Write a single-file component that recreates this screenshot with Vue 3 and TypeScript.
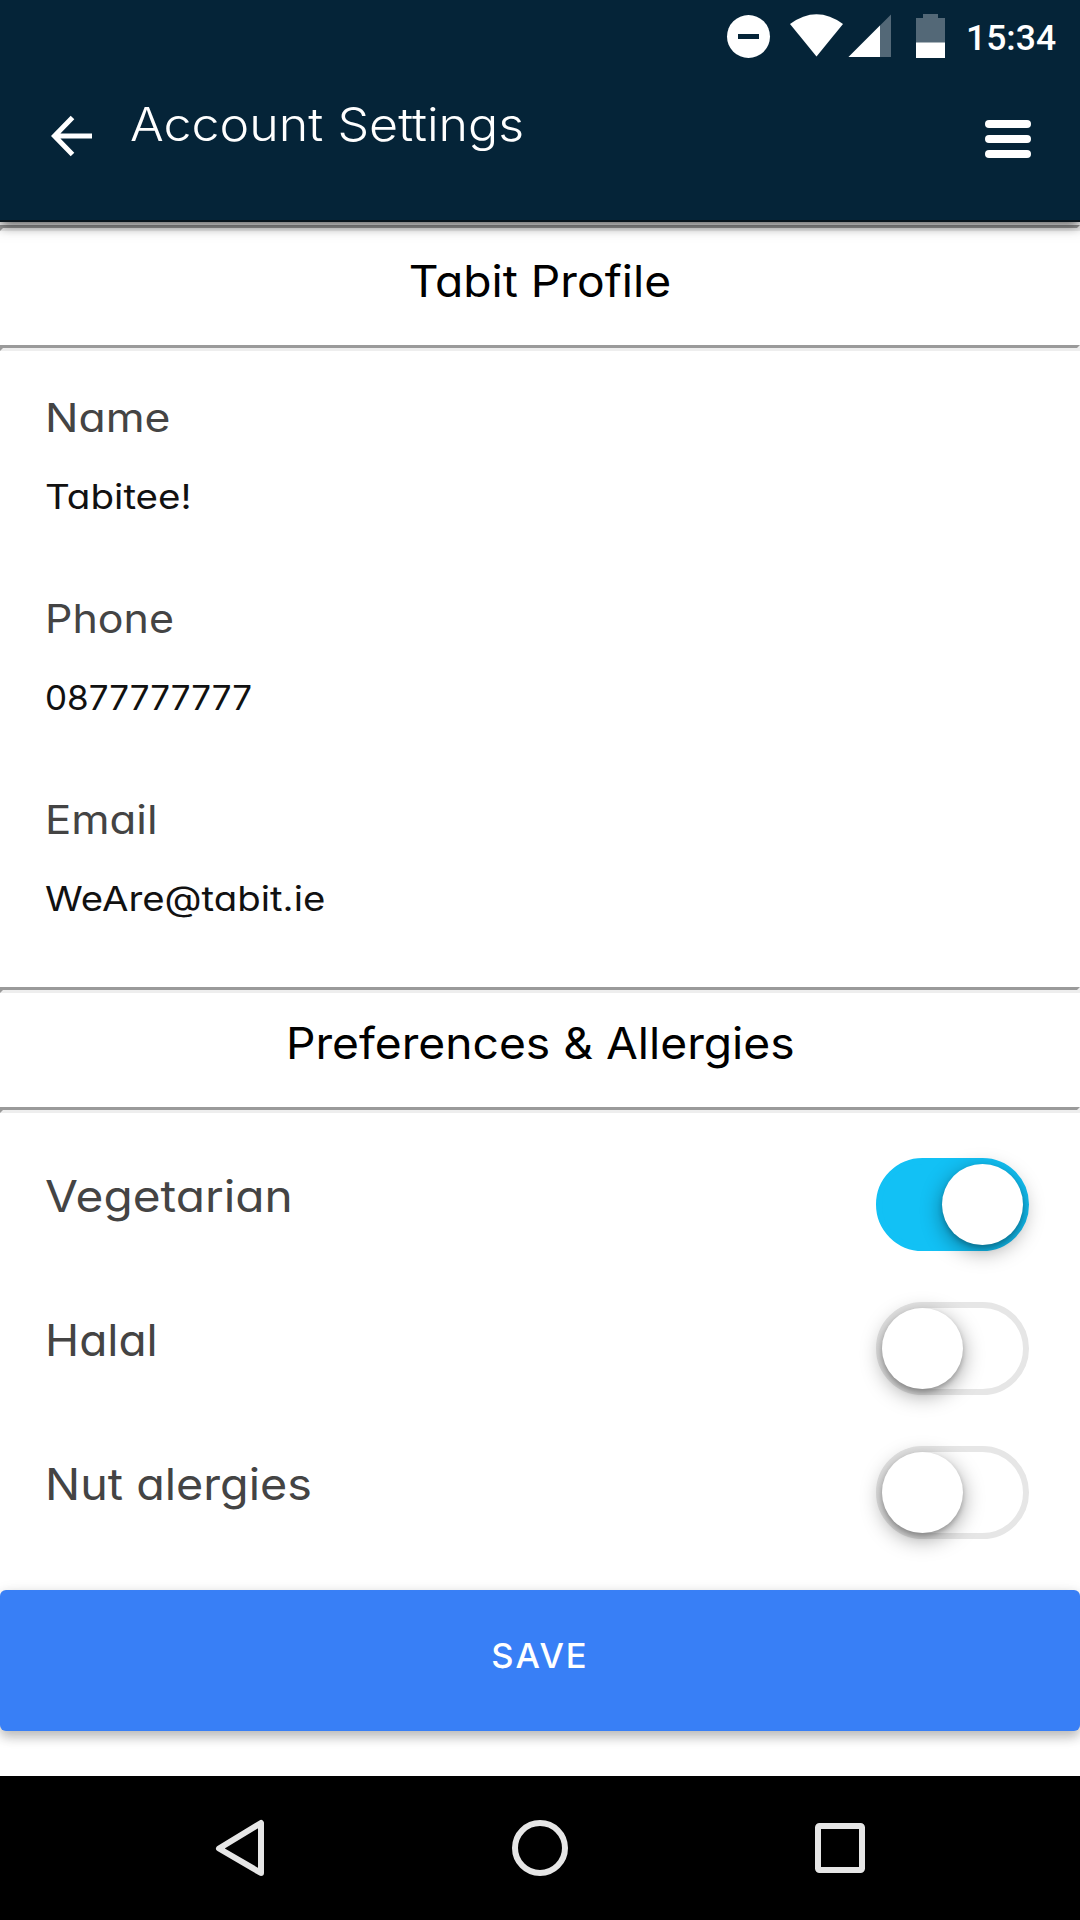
<script setup lang="ts">
import { ref } from 'vue'

interface Field { label: string; value: string; labelStretch: number; valueStretch: number }
interface Preference { label: string; on: boolean; stretch: number }

const fields: Field[] = [
  { label: 'Name', value: 'Tabitee!', labelStretch: 1.125, valueStretch: 1.117 },
  { label: 'Phone', value: '0877777777', labelStretch: 1.087, valueStretch: 1.015 },
  { label: 'Email', value: 'WeAre@tabit.ie', labelStretch: 1.107, valueStretch: 1.112 },
]

const preferences = ref<Preference[]>([
  { label: 'Vegetarian', on: true, stretch: 1.086 },
  { label: 'Halal', on: false, stretch: 1.044 },
  { label: 'Nut alergies', on: false, stretch: 1.061 },
])

// Widens the letterforms horizontally, keeping the left edge in place.
const stretch = (x: number) => ({ transform: `scaleX(${x})` })
</script>

<template>
  <div class="screen">
    <header class="header">
      <div class="status">
        <svg class="status-icons" width="240" height="72" viewBox="720 0 240 72">
          <circle cx="748.5" cy="36.5" r="21.5" fill="#fff" />
          <rect x="738" y="34" width="21" height="5" fill="#052438" />
          <path d="M790 24Q816.500 4.500 843 24L816.500 56.500Z" fill="#fff" />
          <path d="M891 14.500V57H848.500Z" fill="#536877" />
          <path d="M880 25.500V57H848.500Z" fill="#fff" />
          <path d="M923 14H938V18H945V43H916V18H923Z" fill="#536877" />
          <rect x="916" y="42.500" width="29" height="15.500" fill="#fff" />
        </svg>
        <span class="clock">15:34</span>
      </div>
      <div class="toolbar">
        <svg class="back" width="44" height="44" viewBox="0 0 44 44">
          <path d="M41 22H4M21.500 3.500L3.500 22L21.500 40.500" fill="none" stroke="#fff" stroke-width="5" />
        </svg>
        <h1 class="title">Account Settings</h1>
        <div class="menu"><i></i><i></i><i></i></div>
      </div>
    </header>

    <main class="content">
      <hr />
      <h2 class="heading">Tabit Profile</h2>
      <hr />
      <section class="fields">
        <div v-for="f in fields" :key="f.label" class="field">
          <div class="label" :style="stretch(f.labelStretch)">{{ f.label }}</div>
          <div class="value" :style="stretch(f.valueStretch)">{{ f.value }}</div>
        </div>
      </section>
      <hr />
      <h2 class="heading">Preferences &amp; Allergies</h2>
      <hr />
      <section class="toggles">
        <div v-for="p in preferences" :key="p.label" class="row" @click="p.on = !p.on">
          <span class="name" :style="stretch(p.stretch)">{{ p.label }}</span>
          <span class="track" :class="{ on: p.on }"><span class="knob"></span></span>
        </div>
      </section>
      <button class="save">SAVE</button>
    </main>

    <nav class="nav">
      <svg width="1080" height="144" viewBox="0 0 1080 144" fill="none" stroke="#e6e6e6" stroke-width="6" stroke-linejoin="round">
        <path d="M219 72.500L261 47V97Z" />
        <circle cx="540" cy="72" r="25" />
        <rect x="818" y="50" width="44" height="44" rx="1.500" />
      </svg>
    </nav>
  </div>
</template>

<style>
body { margin: 0; background: #fff; }
</style>

<style scoped>
.screen {
  width: 1080px;
  height: 1920px;
  display: flex;
  flex-direction: column;
  overflow: hidden;
  background: #fff;
  font-family: Inter, "Open Sans", sans-serif;
  font-feature-settings: "cv11" 1;
}
.header {
  position: relative;
  z-index: 1;
  flex: none;
  box-sizing: border-box;
  height: 222px;
  background: #052438;
  border-bottom: 2px solid #08151d;
  box-shadow: 0 3px 12px rgba(0, 0, 0, 0.7);
}
.status {
  height: 72px;
  display: flex;
  justify-content: flex-end;
}
.status-icons { flex: none; }
.clock {
  width: 114px;
  margin-left: 6px;
  color: #fff;
  font: 500 35.500px/76px Roboto, sans-serif;
}
.toolbar {
  display: flex;
  align-items: flex-start;
  padding: 21px 49px 0 51px;
}
.back { margin-top: 21px; }
.title {
  margin: 0 auto 0 35px;
  color: #fff;
  font-size: 46px;
  font-weight: 300;
  line-height: 62px;
  white-space: nowrap;
  transform: scaleX(1.09);
  transform-origin: left;
}
.menu {
  display: flex;
  flex-direction: column;
  gap: 7px;
  width: 46px;
  margin-top: 27px;
}
.menu i { height: 8px; border-radius: 4px; background: #fff; }
.content {
  flex: none;
  box-sizing: border-box;
  height: 1554px;
  padding-top: 3px;
}
hr {
  box-sizing: border-box;
  height: 6px;
  margin: 0;
  border: 3px solid;
  border-color: #9a9a9a #eee #eee #9a9a9a;
}
.heading {
  width: fit-content;
  height: 114px;
  margin: 0 auto;
  font-size: 44px;
  font-weight: 400;
  line-height: 100px;
  color: #000;
  transform: scaleX(1.050);
}
.fields {
  box-sizing: border-box;
  height: 636px;
  padding: 37px 0 0 45px;
}
.field {
  display: flex;
  flex-direction: column;
  align-items: flex-start;
  height: 201px;
}
.label {
  color: #444;
  font-size: 39.500px;
  line-height: 61px;
  transform-origin: left;
}
.value {
  margin-top: 18px;
  color: #111;
  font-size: 34.500px;
  line-height: 60px;
  transform-origin: left;
}
.toggles { padding: 45px 51px 0 45px; }
.row {
  display: flex;
  align-items: flex-start;
  justify-content: space-between;
  height: 144px;
}
.name {
  color: #444;
  font-size: 44px;
  line-height: 76px;
  transform-origin: left;
}
.track {
  box-sizing: border-box;
  display: flex;
  width: 153px;
  height: 93px;
  border: 6px solid #e6e6e6;
  border-radius: 47px;
  background: #fff;
}
.track.on {
  justify-content: flex-end;
  border-color: #12c1f5;
  background: #12c1f5;
}
.knob {
  width: 81px;
  height: 81px;
  border-radius: 50%;
  background: #fff;
  box-shadow: 0 6px 21px rgba(0, 0, 0, 0.38), 0 3px 5px rgba(0, 0, 0, 0.2);
}
.save {
  display: block;
  width: 100%;
  height: 141px;
  padding: 0 0 10px;
  border: 0;
  border-radius: 6px;
  background: #387ff6;
  color: #fff;
  font: 500 34.500px/131px Inter, sans-serif;
  letter-spacing: 2px;
  box-shadow: 0 6px 12px rgba(0, 0, 0, 0.22), 0 3px 15px rgba(0, 0, 0, 0.1);
}
.nav {
  flex: none;
  height: 144px;
  background: #000;
}
.nav svg { display: block; }
</style>
